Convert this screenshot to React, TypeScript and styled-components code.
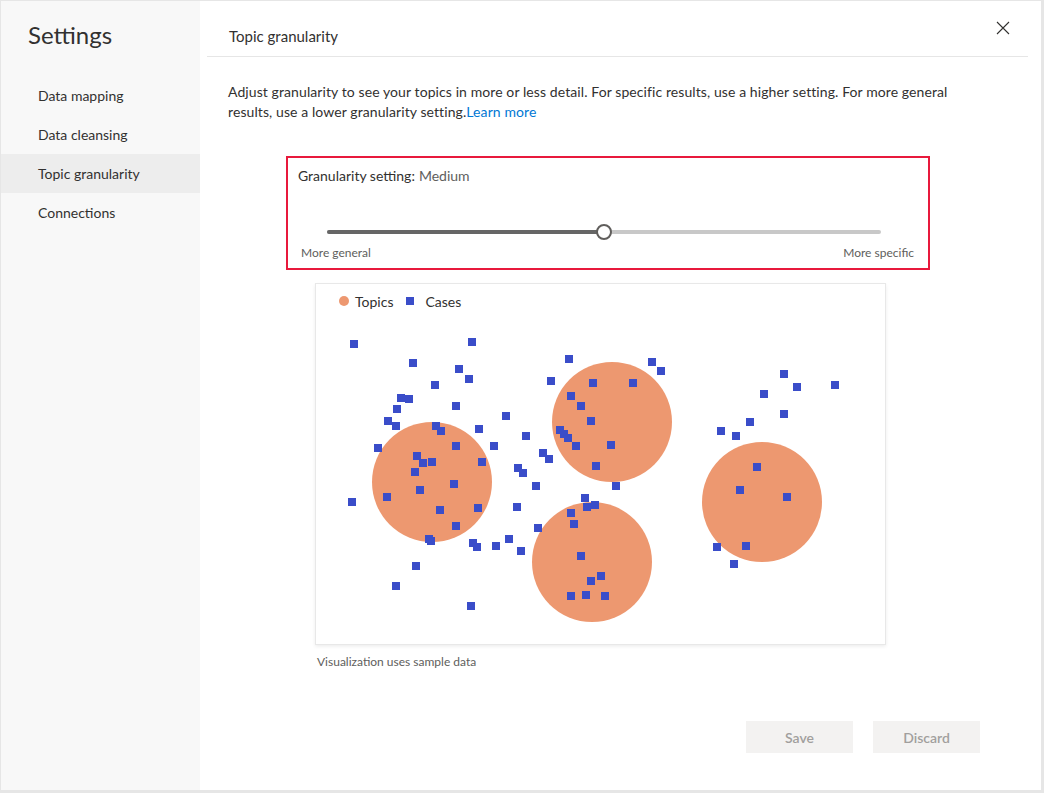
import React from "react";
import styled, { createGlobalStyle } from "styled-components";

const GlobalStyle = createGlobalStyle`
  html, body { margin: 0; padding: 0; background: #e6e6e6; }
  body { font-family: "Segoe UI", Lato, "Open Sans", sans-serif; color: #323130; }
  * { box-sizing: border-box; }
`;

const Dialog = styled.div`
  margin: 1px 0 0 1px;
  width: 1040px;
  height: 789px;
  background: #ffffff;
  display: flex;
`;

const Sidebar = styled.nav`
  width: 199px;
  flex: none;
  background: #f8f8f8;
  display: flex;
  flex-direction: column;
  padding-top: 18px;
`;

const SideTitle = styled.h1`
  margin: 0 0 25px 27px;
  font-size: 24px;
  line-height: 32px;
  font-weight: 400;
  color: #323130;
`;

const NavItem = styled.div<{ $active?: boolean }>`
  height: 39px;
  display: flex;
  align-items: center;
  padding-left: 37px;
  font-size: 14px;
  color: #323130;
  background: ${(p) => (p.$active ? "#ededed" : "transparent")};
`;

const Main = styled.main`
  flex: 1;
  display: flex;
  flex-direction: column;
  position: relative;
  padding-left: 1px;
`;

const Header = styled.header`
  height: 56px;
  margin: 0 13px 0 6px;
  border-bottom: 1px solid #e6e6e6;
  display: flex;
  align-items: flex-end;
  justify-content: space-between;
  padding: 0 0 10px 22px;
`;

const HeaderTitle = styled.h2`
  margin: 0;
  font-size: 15px;
  line-height: 20px;
  font-weight: 400;
  color: #323130;
`;

const CloseButton = styled.button`
  position: absolute;
  top: 19px;
  right: 30px;
  width: 16px;
  height: 16px;
  padding: 0;
  border: none;
  background: transparent;
  display: flex;
  align-items: center;
  justify-content: center;
  cursor: pointer;
`;

const Description = styled.p`
  margin: 25px 0 0 27px;
  width: 750px;
  font-size: 14px;
  line-height: 20px;
  letter-spacing: 0.09px;
  color: #323130;
`;

const Link = styled.a`
  color: #0078d4;
  text-decoration: none;
`;

const SliderBox = styled.section`
  margin: 34px 0 0 85px;
  width: 644px;
  height: 114px;
  border: 2px solid #e8193c;
  display: flex;
  flex-direction: column;
  padding: 8px 14px 0 13px;
`;

const SettingLabel = styled.div`
  font-size: 14px;
  line-height: 20px;
  color: #323130;
  margin-left: -3px;
`;

const SettingValue = styled.span`
  color: #605e5c;
  margin-left: 4px;
`;

const TrackWrap = styled.div`
  margin: 38px 33px 0 26px;
  height: 16px;
  display: flex;
  align-items: center;
  position: relative;
`;

const Track = styled.div`
  width: 100%;
  height: 4px;
  border-radius: 2px;
  background: #c8c8c8;
  position: relative;
`;

const TrackFill = styled.div`
  height: 4px;
  border-radius: 2px;
  background: #666666;
`;

const Thumb = styled.div`
  position: absolute;
  top: 50%;
  width: 16px;
  height: 16px;
  margin: -8px 0 0 -8px;
  border-radius: 50%;
  border: 2px solid #605e5c;
  background: #ffffff;
`;

const SliderLabels = styled.div`
  display: flex;
  justify-content: space-between;
  font-size: 12px;
  line-height: 16px;
  color: #605e5c;
  margin-top: 5px;
`;

const ChartCard = styled.section`
  margin: 13px 0 0 114px;
  width: 571px;
  height: 362px;
  border: 1px solid #e8e8e8;
  box-shadow: 0 1.6px 3.6px rgba(0, 0, 0, 0.08), 0 0.3px 0.9px rgba(0, 0, 0, 0.06);
  display: flex;
  flex-direction: column;
`;

const Legend = styled.div`
  height: 38px;
  display: flex;
  align-items: center;
  padding: 0 0 4px 23px;
  font-size: 14px;
  color: #323130;
`;

const LegendItem = styled.div`
  display: flex;
  align-items: center;
  margin-right: 13px;
`;

const DotMarker = styled.span`
  width: 10px;
  height: 10px;
  border-radius: 50%;
  background: #ed9870;
  margin-right: 6px;
`;

const SquareMarker = styled.span`
  width: 8px;
  height: 8px;
  background: #3a4dc9;
  margin-right: 11px;
`;

const Caption = styled.div`
  margin: 9px 0 0 116px;
  font-size: 12px;
  line-height: 16px;
  color: #605e5c;
`;

const Footer = styled.footer`
  margin-top: auto;
  margin-bottom: 37px;
  display: flex;
  justify-content: flex-end;
  gap: 20px;
  padding-right: 61px;
`;

const FooterButton = styled.button`
  width: 107px;
  height: 32px;
  border: none;
  background: #f3f2f1;
  color: #a19f9d;
  font-family: inherit;
  font-size: 14px;
  font-weight: 600;
`;

const circles: [number, number][] = [
  [432, 481],
  [612, 421],
  [592, 561],
  [762, 501],
];

const squares: [number, number][] = [
  [354, 343], [472, 341], [413, 362], [459, 368], [469, 378], [435, 384],
  [401, 397], [409, 398], [397, 408], [456, 405], [388, 420], [396, 425],
  [378, 447], [436, 425], [441, 430], [479, 428], [456, 445], [506, 415],
  [494, 445], [526, 435], [543, 452], [549, 458], [551, 380], [569, 358],
  [593, 382], [571, 395], [581, 405], [591, 420], [560, 429], [564, 433],
  [568, 437], [576, 445], [417, 455], [423, 462], [432, 461], [482, 461],
  [415, 471], [518, 467], [523, 472], [596, 465], [652, 361], [661, 370],
  [633, 382], [611, 444], [784, 373], [797, 386], [835, 384], [764, 393],
  [784, 413], [750, 421], [721, 430], [736, 435], [536, 485], [454, 483],
  [420, 489], [387, 496], [352, 501], [440, 509], [478, 507], [517, 506],
  [585, 497], [587, 506], [595, 504], [571, 512], [574, 523], [538, 527],
  [456, 525], [429, 538], [431, 540], [473, 542], [477, 546], [496, 545],
  [509, 538], [521, 550], [581, 555], [601, 575], [591, 580], [571, 595],
  [586, 594], [605, 595], [416, 565], [396, 585], [471, 605], [616, 485],
  [757, 466], [740, 489], [787, 496], [717, 546], [746, 545], [734, 563],
];

function Scatter() {
  return (
    <svg width={569} height={322} viewBox="316 321 569 322" style={{ display: "block" }}>
      {circles.map(([cx, cy], i) => (
        <circle key={`c${i}`} cx={cx} cy={cy} r={60} fill="#ed9870" />
      ))}
      {squares.map(([x, y], i) => (
        <rect key={`s${i}`} x={x - 4} y={y - 4} width={8} height={8} fill="#3a4dc9" />
      ))}
    </svg>
  );
}

export default function App() {
  const value = 50;
  return (
    <>
      <GlobalStyle />
      <Dialog>
        <Sidebar>
          <SideTitle>Settings</SideTitle>
          <NavItem>Data mapping</NavItem>
          <NavItem>Data cleansing</NavItem>
          <NavItem $active>Topic granularity</NavItem>
          <NavItem>Connections</NavItem>
        </Sidebar>
        <Main>
          <Header>
            <HeaderTitle>Topic granularity</HeaderTitle>
          </Header>
          <CloseButton aria-label="Close">
            <svg width="14" height="14" viewBox="0 0 14 14">
              <path d="M1 1 L13 13 M13 1 L1 13" stroke="#323130" strokeWidth="1.1" fill="none" />
            </svg>
          </CloseButton>
          <Description>
            Adjust granularity to see your topics in more or less detail. For specific results, use a
            higher setting. For more general results, use a lower granularity setting.
            <Link href="#">Learn more</Link>
          </Description>
          <SliderBox>
            <SettingLabel>
              Granularity setting:<SettingValue>Medium</SettingValue>
            </SettingLabel>
            <TrackWrap>
              <Track>
                <TrackFill style={{ width: `${value}%` }} />
              </Track>
              <Thumb style={{ left: `${value}%` }} />
            </TrackWrap>
            <SliderLabels>
              <span>More general</span>
              <span>More specific</span>
            </SliderLabels>
          </SliderBox>
          <ChartCard>
            <Legend>
              <LegendItem>
                <DotMarker />
                Topics
              </LegendItem>
              <LegendItem>
                <SquareMarker />
                Cases
              </LegendItem>
            </Legend>
            <Scatter />
          </ChartCard>
          <Caption>Visualization uses sample data</Caption>
          <Footer>
            <FooterButton>Save</FooterButton>
            <FooterButton>Discard</FooterButton>
          </Footer>
        </Main>
      </Dialog>
    </>
  );
}
